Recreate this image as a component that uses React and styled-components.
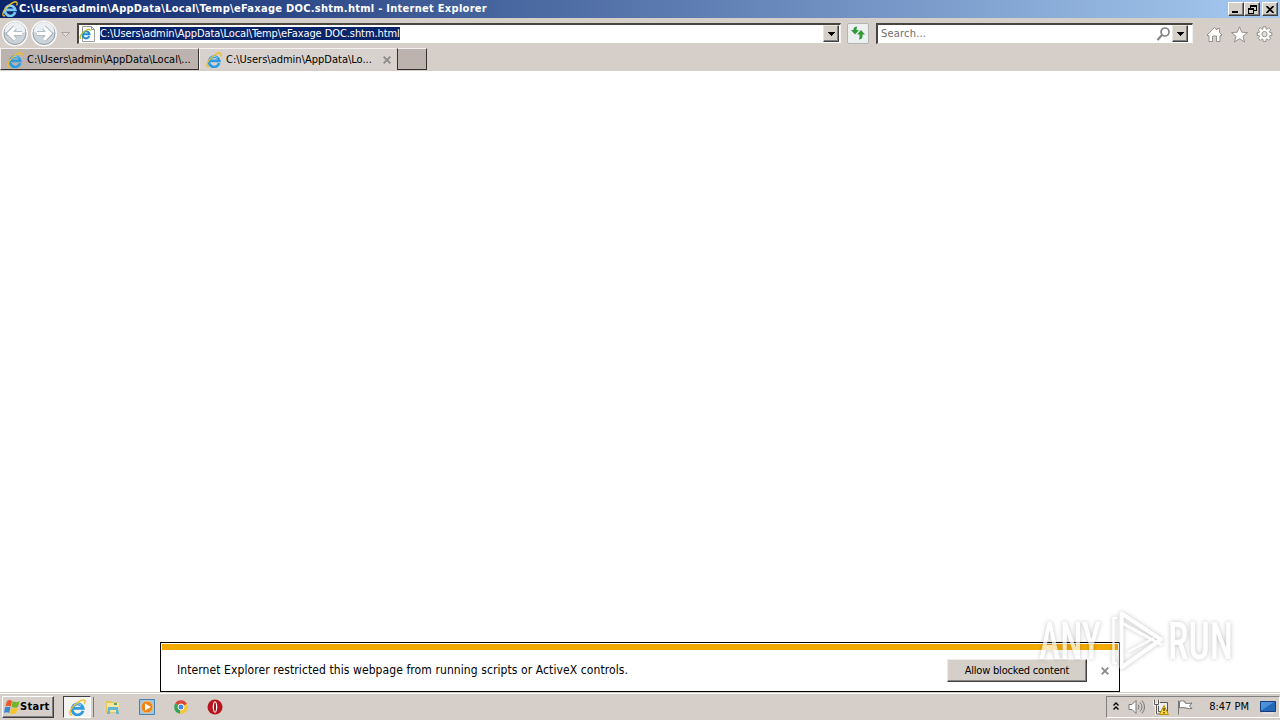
import styled, { createGlobalStyle } from 'styled-components';

const GlobalStyle = createGlobalStyle`
  * {
    box-sizing: border-box;
  }
  body {
    margin: 0;
    overflow: hidden;
    font-family: 'DejaVu Sans Condensed', 'DejaVu Sans', sans-serif;
    font-stretch: condensed;
    font-size: 11px;
    color: #000;
  }
  svg {
    display: block;
    flex: none;
  }
`;

const Screen = styled.div`
  position: relative;
  display: flex;
  flex-direction: column;
  width: 1280px;
  height: 720px;
  background: #fff;
  overflow: hidden;
`;

const Label = styled.span`
  white-space: nowrap;
  line-height: 14px;
  font-size: ${({ $size }) => $size || 11}px;
  font-weight: ${({ $bold }) => ($bold ? 700 : 400)};
  letter-spacing: ${({ $track }) => $track || 0}px;
`;

const TitleBar = styled.header`
  display: flex;
  align-items: center;
  gap: 1px;
  height: 18px;
  padding: 0 2px;
  color: #fff;
  background: linear-gradient(90deg, #0a246a, #a6caf0);
`;

const WindowButtons = styled.div`
  display: flex;
  margin-left: auto;
`;

const WindowButton = styled.button`
  display: flex;
  align-items: center;
  justify-content: center;
  width: 16px;
  height: 14px;
  padding: 0;
  margin-left: ${({ $gap }) => $gap || 0}px;
  border: 1px solid;
  border-color: #fff #404040 #404040 #fff;
  background: #d4d0c8;
  box-shadow: inset -1px -1px #808080;
`;

const Toolbar = styled.div`
  display: flex;
  align-items: center;
  height: 30px;
  background: #d5cec9;
`;

const NavButtons = styled.div`
  display: flex;
  width: 77px;
`;

const Field = styled.div`
  display: flex;
  align-items: center;
  width: ${({ $width }) => $width}px;
  height: 21px;
  padding: 0 1px 0 0;
  background: #fff;
  border: 1px solid;
  border-width: 2px 1px 1px 2px;
  border-color: #484440 #f2efec #d4d0c8 #484440;
`;

const Selection = styled(Label)`
  height: 13px;
  line-height: 13px;
  margin-left: 4px;
  color: #fff;
  background: #0a246a;
`;

const Placeholder = styled(Label)`
  margin: 1px 0 0 3px;
  color: #6d6d6d;
`;

const FieldButtons = styled.div`
  display: flex;
  align-items: center;
  gap: 2px;
  margin-left: auto;
  padding-right: ${({ $inset }) => $inset || 0}px;
`;

const DropButton = styled.button`
  display: flex;
  align-items: center;
  justify-content: center;
  width: 16px;
  height: 17px;
  padding: 0;
  border: 1px solid;
  border-color: #e8e5e0 #404040 #404040 #e8e5e0;
  background: #d4d0c8;
  box-shadow: inset -1px -1px #808080;
`;

const RefreshButton = styled.button`
  display: flex;
  align-items: center;
  justify-content: center;
  width: 22px;
  height: 21px;
  margin: 0 7px 0 6px;
  padding: 0;
  border: 1px solid #b4b4b4;
  border-radius: 2px;
  background: #edf0f1;
`;

const Tools = styled.div`
  display: flex;
  gap: 8px;
  margin: 3px 7px 0 auto;
`;

const TabStrip = styled.nav`
  display: flex;
  height: 23px;
  background: #d5cec9;
`;

const Tab = styled.div`
  display: flex;
  align-items: center;
  width: ${({ $width }) => $width}px;
  height: 22px;
  padding: 1px 5px 0 6px;
  background: ${({ $active }) => ($active ? '#d8d2ce' : '#bcb3ae')};
  border: 1px solid;
  border-color: #f4f2f0 ${({ $active }) => ($active ? '#d5cec9 #d5cec9' : '#35312f #35312f')} #f4f2f0;
`;

const TabLabel = styled(Label)`
  flex: 1;
  margin: 1px 0 0 4px;
`;

const NewTab = styled.div`
  width: 30px;
  height: 22px;
  background: #bcb3ae;
  border: 1px solid;
  border-color: #f4f2f0 #35312f #35312f #35312f;
`;

const Page = styled.main`
  display: flex;
  flex: 1;
  align-items: flex-end;
  justify-content: center;
  background: #fff;
`;

const Notification = styled.section`
  width: 960px;
  height: 50px;
  padding: 1px;
  background: #fff;
  border: 1px solid #000;
`;

const Stripe = styled.div`
  height: 6px;
  background: #f3aa00;
`;

const Message = styled.div`
  display: flex;
  align-items: center;
  justify-content: space-between;
  height: 40px;
  padding: 0 9px 0 15px;
`;

const Actions = styled.div`
  display: flex;
  align-items: center;
  gap: 14px;
  padding-top: 1px;
`;

const AllowButton = styled.button`
  width: 140px;
  height: 23px;
  padding: 1px 0 0;
  font: inherit;
  color: #000;
  background: #d4cfc9;
  border: 1px solid;
  border-color: #eeeae6 #404040 #404040 #eeeae6;
  box-shadow: inset -1px -1px #8a8580;
`;

const Taskbar = styled.footer`
  display: flex;
  align-items: center;
  height: 28px;
  padding: 1px 0 0 2px;
  background: #d5cec9;
  border-top: 1px solid #d4d0c8;
  box-shadow: inset 0 1px #fff;
`;

const StartButton = styled.button`
  display: flex;
  align-items: center;
  gap: 0;
  width: 52px;
  height: 22px;
  padding: 0 1px;
  font: inherit;
  color: #000;
  background: #d5cec9;
  border: 1px solid;
  border-color: #fff #404040 #404040 #fff;
  box-shadow: inset -1px -1px #808080;
`;

const TaskButton = styled.div`
  display: flex;
  align-items: center;
  justify-content: center;
  width: 28px;
  height: 22px;
  margin: 0 14px 0 9px;
  background: #f5f3f1;
  border: 1px solid;
  border-color: #404040 #fff #fff #404040;
  box-shadow: 3px 0 0 -1px #d5cec9, 4px 0 0 -1px #777;
`;

const Pinned = styled.div`
  display: flex;
  gap: 18px;
`;

const Tray = styled.div`
  display: flex;
  align-items: center;
  width: 174px;
  height: 22px;
  margin-left: auto;
  padding: 0 3px 0 6px;
  border: 1px solid;
  border-color: #808080 #fff #fff #808080;
`;

const TrayIcons = styled.div`
  display: flex;
  align-items: center;
  gap: 8px;
`;

const Clock = styled(Label)`
  margin: 0 11px 0 auto;
`;

const Watermark = styled.svg`
  position: absolute;
  left: 1030px;
  top: 600px;
  opacity: 0.7;
  filter: drop-shadow(0 0 2px rgba(60, 60, 60, 0.45));
`;

const IeIcon = ({ size = 16, color = '#2d9be0' }) => (
  <svg width={size} height={size} viewBox='0 0 16 16' fill='none'>
    <path d='M13.2 11.2A5.2 5.2 0 1 1 13.3 8.8H4.5' stroke={color} strokeWidth='2.7' />
    <path d='M4 7.4A4.4 4.4 0 0 1 11.5 6' stroke='#8fdcfa' strokeWidth='1' />
    <path
      d='M3.1 14.7C.2 15.8.2 12.2 2.5 8.9 5.5 4.5 12.6-.7 14.7 1.2c.8.8.4 2.2-.2 3.3'
      stroke='#f0bd25'
      strokeWidth='1.3'
    />
  </svg>
);

const NavArrow = ({ flip }) => (
  <svg width='29' height='28' viewBox='0 0 29 28'>
    <circle cx='15' cy='14.5' r='13' fill='#f8f8f8' />
    <circle cx='15' cy='14.5' r='11' fill='#cbd3d9' stroke='#929ca4' />
    <path d='M4.5 13a10.5 10 0 0 1 21 0q-10.5 4-21 0Z' fill='#edf0f2' />
    <g transform={flip ? 'translate(30 0) scale(-1 1)' : undefined} fill='none'>
      <path d='m15 8.5-6 6 6 6M9 14.5h13' stroke='#9aa7b0' strokeWidth='5' />
      <path d='m15 8.5-6 6 6 6M9 14.5h13' stroke='#fff' strokeWidth='3.4' />
    </g>
  </svg>
);

const DownArrow = () => (
  <svg width='7' height='4' viewBox='0 0 7 4' shapeRendering='crispEdges'>
    <path d='M0 0h7L3.5 4Z' />
  </svg>
);

const CloseMark = () => (
  <svg width='8' height='8' viewBox='0 0 8 8'>
    <path d='m.7.7 6.6 6.6m0-6.6L.7 7.3' stroke='#8b8b8b' strokeWidth='1.9' />
  </svg>
);

const PageIcon = () => (
  <svg width='17' height='16' viewBox='0 0 17 16' fill='none'>
    <path d='M3.5.5h9l3 3v12h-12Z' fill='#fff' stroke='#9b9b9b' />
    <path d='M12.5.5v3h3' stroke='#9b9b9b' />
    <path d='M10.3 10.2a3.500 3.500 0 1 1 .2-2H4' stroke='#218bd0' strokeWidth='2' />
    <path d='M2.300 12.400C-.5 13 2 7.500 6 5c3-2 5.500-2.400 5.100-.2' stroke='#b9c431' strokeWidth='1.3' />
  </svg>
);

const App = () => {
  return (
    <>
      <GlobalStyle />
      <Screen>
        <TitleBar>
          <IeIcon color='#79c8f4' />
          <Label $bold $track={0.28}>
            C:\Users\admin\AppData\Local\Temp\eFaxage DOC.shtm.html - Internet Explorer
          </Label>
          <WindowButtons>
            <WindowButton>
              <svg width='8' height='8'>
                <path d='M0 6h6v2H0Z' />
              </svg>
            </WindowButton>
            <WindowButton>
              <svg width='9' height='9' fill='none' stroke='#000' shapeRendering='crispEdges'>
                <path d='M2.500 3V.500h6v5H6M2 1.500h7M.500 3.500h5v5h-5ZM0 4.500h6' />
              </svg>
            </WindowButton>
            <WindowButton $gap={2}>
              <svg width='8' height='7' stroke='#000' strokeWidth='1.7'>
                <path d='m.5 0 7 7m0-7-7 7' />
              </svg>
            </WindowButton>
          </WindowButtons>
        </TitleBar>
        <Toolbar>
          <NavButtons>
            <NavArrow />
            <NavArrow flip />
            <svg width='14' height='28'>
              <path d='M3.500 13.500h8l-4 4Z' fill='#e5e0dc' stroke='#aaa4a0' />
            </svg>
          </NavButtons>
          <Field $width={764}>
            <PageIcon />
            <Selection $track={-0.08}>C:\Users\admin\AppData\Local\Temp\eFaxage DOC.shtm.html</Selection>
            <FieldButtons>
              <DropButton>
                <DownArrow />
              </DropButton>
            </FieldButtons>
          </Field>
          <RefreshButton>
            <svg width='16' height='16' fill='#319a39'>
              <path d='M7 1.500C4.500 1.500 3.500 3 3.500 5H1l4 4.500L9 5H6.500C6.500 3.500 7 2.500 7 1.500Z' />
              <path d='M9 14.500c2.500 0 3.500-1.500 3.500-3.500V9.500H15L11 5 7 9.500h2.500c0 2.500 0 3.500-.5 5Z' />
            </svg>
          </RefreshButton>
          <Field $width={317}>
            <Placeholder $track={0.2}>Search...</Placeholder>
            <FieldButtons $inset={3}>
              <svg width='14' height='14' fill='none' stroke='#858585'>
                <circle cx='9' cy='5' r='4' strokeWidth='1.7' />
                <path d='m6 8-4.500 5' strokeWidth='2.2' />
              </svg>
              <DropButton>
                <DownArrow />
              </DropButton>
            </FieldButtons>
          </Field>
          <Tools>
            <svg width='17' height='17' fill='#fff' stroke='#96918d'>
              <path d='m1 9 7.500-7.500L11 4V2.500h2.500v4L16 9l-1 1-1-.5v6h-3.500V10h-4v5.500H3v-6l-1 .5Z' />
            </svg>
            <svg width='17' height='17' fill='#fff' stroke='#96918d'>
              <path d='m8.500.800 2.200 5.400 5.800.400-4.500 3.700 1.500 5.600-5-3.100-5 3.100L5 10.300.500 6.600l5.800-.4Z' />
            </svg>
            <svg width='17' height='17' fill='#fff' stroke='#96918d'>
              <path d='m7 .800h3v2l1.200.5 1.500-1.500 2.100 2.100-1.500 1.500.5 1.200h2v3h-2l-.5 1.200 1.500 1.500-2.100 2.100-1.500-1.500-1.200.5v2H7v-2l-1.200-.5-1.500 1.500-2.100-2.100 1.500-1.500-.5-1.200h-2v-3h2l.5-1.200-1.500-1.500 2.100-2.100 1.500 1.500L7 2.800Z' />
              <circle cx='8.500' cy='8.100' r='2.600' fill='#e5e1de' />
            </svg>
          </Tools>
        </Toolbar>
        <TabStrip>
          <Tab $width={199}>
            <IeIcon />
            <TabLabel>C:\Users\admin\AppData\Local\...</TabLabel>
          </Tab>
          <Tab $active $width={198}>
            <IeIcon />
            <TabLabel>C:\Users\admin\AppData\Lo...</TabLabel>
            <CloseMark />
          </Tab>
          <NewTab />
        </TabStrip>
        <Page>
          <Notification>
            <Stripe />
            <Message>
              <Label $size={12} $track={0.09}>
                Internet Explorer restricted this webpage from running scripts or ActiveX controls.
              </Label>
              <Actions>
                <AllowButton>
                  <Label $track={-0.2}>Allow blocked content</Label>
                </AllowButton>
                <CloseMark />
              </Actions>
            </Message>
          </Notification>
        </Page>
        <Taskbar>
          <StartButton>
            <svg width='16' height='16'>
              <path d='M3 2q3-1.800 5 0L6.800 7.500q-3-1.500-5.500 0Z' fill='#ed5829' />
              <path d='M8.600 2.300q3.500 1.500 7 0L14 8q-3 1.500-6.500 0Z' fill='#74b52b' />
              <path d='M1 8.500q2.800-1.500 5.500 0L5.200 14q-2.500-1.500-5.200 0Z' fill='#3789d1' />
              <path d='M7.200 8.800q3.300 1.500 6.500 0l-1.500 5.500q-3 1.500-6.500 0Z' fill='#f8c32d' />
            </svg>
            <Label $bold $track={0.3}>Start</Label>
          </StartButton>
          <TaskButton>
            <IeIcon size={17} />
          </TaskButton>
          <Pinned>
            <svg width='16' height='16'>
              <path d='M1 2h5l1 1h6v11H1Z' fill='#e7c55d' />
              <path d='M2 4h12v9H2Z' fill='#f8e69e' />
              <path d='M3 8h10l1 7h-3v-4H5v4H2Z' fill='#61b5d2' />
              <path d='M9 4h3v2H9Z' fill='#5aa962' />
            </svg>
            <svg width='16' height='16'>
              <path d='M.5.5h15v15H.5Z' fill='#9cc8e8' stroke='#4682b2' />
              <circle cx='8' cy='8' r='6' fill='#ef8519' stroke='#f7c27b' />
              <path d='m6 4.500 6 3.500-6 3.500Z' fill='#fff' />
            </svg>
            <svg width='16' height='16'>
              <path d='M8 8 2.200 4.500A6.700 6.700 0 0 1 14 5Z' fill='#dc4636' />
              <path d='M8 8h-.2L7 14.700A6.700 6.700 0 0 1 2.200 4.500Z' fill='#35a455' />
              <path d='M8 8 14 5A6.700 6.700 0 0 1 7 14.700Z' fill='#f6c832' />
              <circle cx='8' cy='8' r='3' fill='#4686df' stroke='#fff' />
            </svg>
            <svg width='16' height='16'>
              <circle cx='8' cy='8' r='7.500' fill='#b7141d' />
              <ellipse cx='8' cy='8' rx='2.300' ry='5.800' fill='#fff' />
              <ellipse cx='8' cy='8' rx='1' ry='4.800' fill='#991018' />
            </svg>
          </Pinned>
          <Tray>
            <TrayIcons>
              <svg width='7' height='11' viewBox='0 1 7 11' fill='none' stroke='#000' strokeWidth='1.400'>
                <path d='m.5 4.500 2.500-2.500 2.500 2.500M.5 8.500 3 6l2.500 2.500' />
              </svg>
              <svg width='17' height='16' fill='#fff' stroke='#777'>
                <path d='M1 5.500h3l4-4v13l-4-4H1Z' />
                <path d='M10 5.500q2 2.500 0 5M12 3.500q4 4.500 0 9M14 1.500q5 6.500 0 13' fill='none' />
              </svg>
              <svg width='16' height='16' fill='none' stroke='#555'>
                <path d='M5.500 3.500h9v9h-9Z' fill='#eee' />
                <path d='M1.500.500v5h4v-5M3.500 5v10h4' stroke='#fff' strokeWidth='2.500' />
                <path d='M1.500.500v5h4v-5M3.500 5v10h4' />
                <path d='m11 6.500 4.500 9h-9Z' fill='#ffdb31' stroke='#b79110' />
                <path d='M11 9v3m0 1v1.500' stroke='#000' />
              </svg>
              <svg width='16' height='16' fill='#fff' stroke='#777'>
                <path d='M1.500 1.500v14M2.500 2.500q3-1.500 5.500 0v1.500q3 1 7 0l-2.500 3 2.500 2.500q-3 .5-6-.5-3-1-6.500 0Z' />
              </svg>
            </TrayIcons>
            <Clock>8:47 PM</Clock>
            <svg width='16' height='16'>
              <path d='M.5 2.500h15v10H.5Z' fill='#2368b9' stroke='#163c7c' />
              <path d='M1 3h13L2 11H1Z' fill='#4c92d8' />
              <path d='M3 13.500h11v1H3Z' fill='#e7eff7' />
            </svg>
          </Tray>
        </Taskbar>
        <Watermark width='220' height='85' fontFamily='Roboto, sans-serif' fontSize='52' fontWeight='500' fill='#fff'>
          <text x='9' y='59' textLength='62' lengthAdjust='spacingAndGlyphs'>
            ANY
          </text>
          <g fill='none' stroke='#fff'>
            <path d='M92 13v10l40 22' strokeWidth='3' />
            <path d='M91.500 13.500v54L131 39.500Z' strokeWidth='4' strokeLinejoin='round' />
            <path d='M87 18h-3.500v45H87' strokeWidth='2.500' />
            <path d='m98 52 26-14' strokeWidth='2' />
          </g>
          <text x='138' y='59' textLength='65' lengthAdjust='spacingAndGlyphs'>
            RUN
          </text>
        </Watermark>
      </Screen>
    </>
  );
};

export default App;
